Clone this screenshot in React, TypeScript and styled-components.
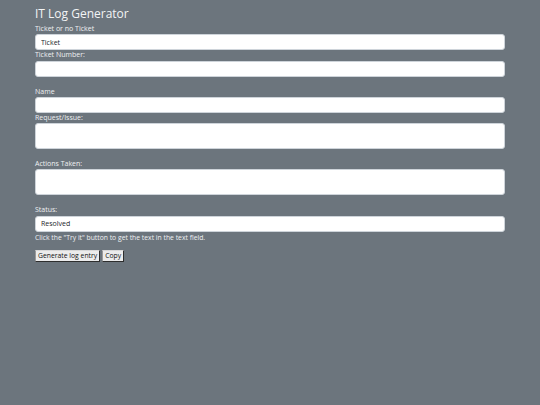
import styled, { createGlobalStyle } from "styled-components";

const GlobalStyle = createGlobalStyle`
    html, body {
        margin: 0;
        padding: 0;
        background-color: #6c757d;
        min-height: 100%;
    }
    body {
        font-family: "Open Sans", "Noto Sans", sans-serif;
    }
`;

const Page = styled.div`
    width: 470px;
    margin: 0 auto;
    padding-top: 4px;
    display: flex;
    flex-direction: column;
`;

const Title = styled.h1`
    font-size: 12px;
    font-weight: 400;
    color: #f3f4f5;
    margin: 0;
    line-height: 20px;
`;

const Field = styled.div<{ $spaced?: boolean }>`
    display: flex;
    flex-direction: column;
    margin-bottom: ${props => props.$spaced ? 10 : 0}px;
`;

const Label = styled.label`
    font-size: 7px;
    line-height: 10.3px;
    color: #eef0f2;
`;

const Input = styled.input`
    box-sizing: border-box;
    height: 16px;
    width: 100%;
    border: 1px solid #ced4da;
    border-radius: 3px;
    background: #ffffff;
    font-family: inherit;
    font-size: 7px;
    color: #212529;
    padding: 0 5px;
    margin: 0;
    outline: none;
`;

const TextArea = styled.textarea`
    box-sizing: border-box;
    display: block;
    height: 26px;
    width: 100%;
    border: 1px solid #ced4da;
    border-radius: 3px;
    background: #ffffff;
    font-family: inherit;
    font-size: 7px;
    padding: 3px 5px;
    margin: 0;
    resize: none;
    outline: none;
`;

const Hint = styled.p`
    font-size: 6.8px;
    line-height: 11.5px;
    color: #eef0f2;
    margin: 0 0 6.5px 0;
`;

const ButtonRow = styled.div`
    display: flex;
    gap: 2px;
`;

const Button = styled.button`
    font-family: inherit;
    font-size: 6.8px;
    height: 12px;
    line-height: 10px;
    padding: 0 2px;
    background: #ececec;
    color: #111111;
    border: 1px solid #2e2e2e;
    border-top-color: #d8d8d8;
    border-left-color: #9a9a9a;
    border-radius: 0;
    cursor: pointer;
`;

export default function App() {
    return (
        <>
            <GlobalStyle />
            <Page>
                <Title>IT Log Generator</Title>
                <Field>
                    <Label>Ticket or no Ticket</Label>
                    <Input defaultValue="Ticket" />
                </Field>
                <Field $spaced>
                    <Label>Ticket Number:</Label>
                    <Input />
                </Field>
                <Field>
                    <Label>Name</Label>
                    <Input />
                </Field>
                <Field $spaced>
                    <Label>Request/Issue:</Label>
                    <TextArea />
                </Field>
                <Field $spaced>
                    <Label>Actions Taken:</Label>
                    <TextArea />
                </Field>
                <Field>
                    <Label>Status:</Label>
                    <Input defaultValue="Resolved" />
                </Field>
                <Hint>Click the "Try it" button to get the text in the text field.</Hint>
                <ButtonRow>
                    <Button>Generate log entry</Button>
                    <Button>Copy</Button>
                </ButtonRow>
            </Page>
        </>
    );
}
